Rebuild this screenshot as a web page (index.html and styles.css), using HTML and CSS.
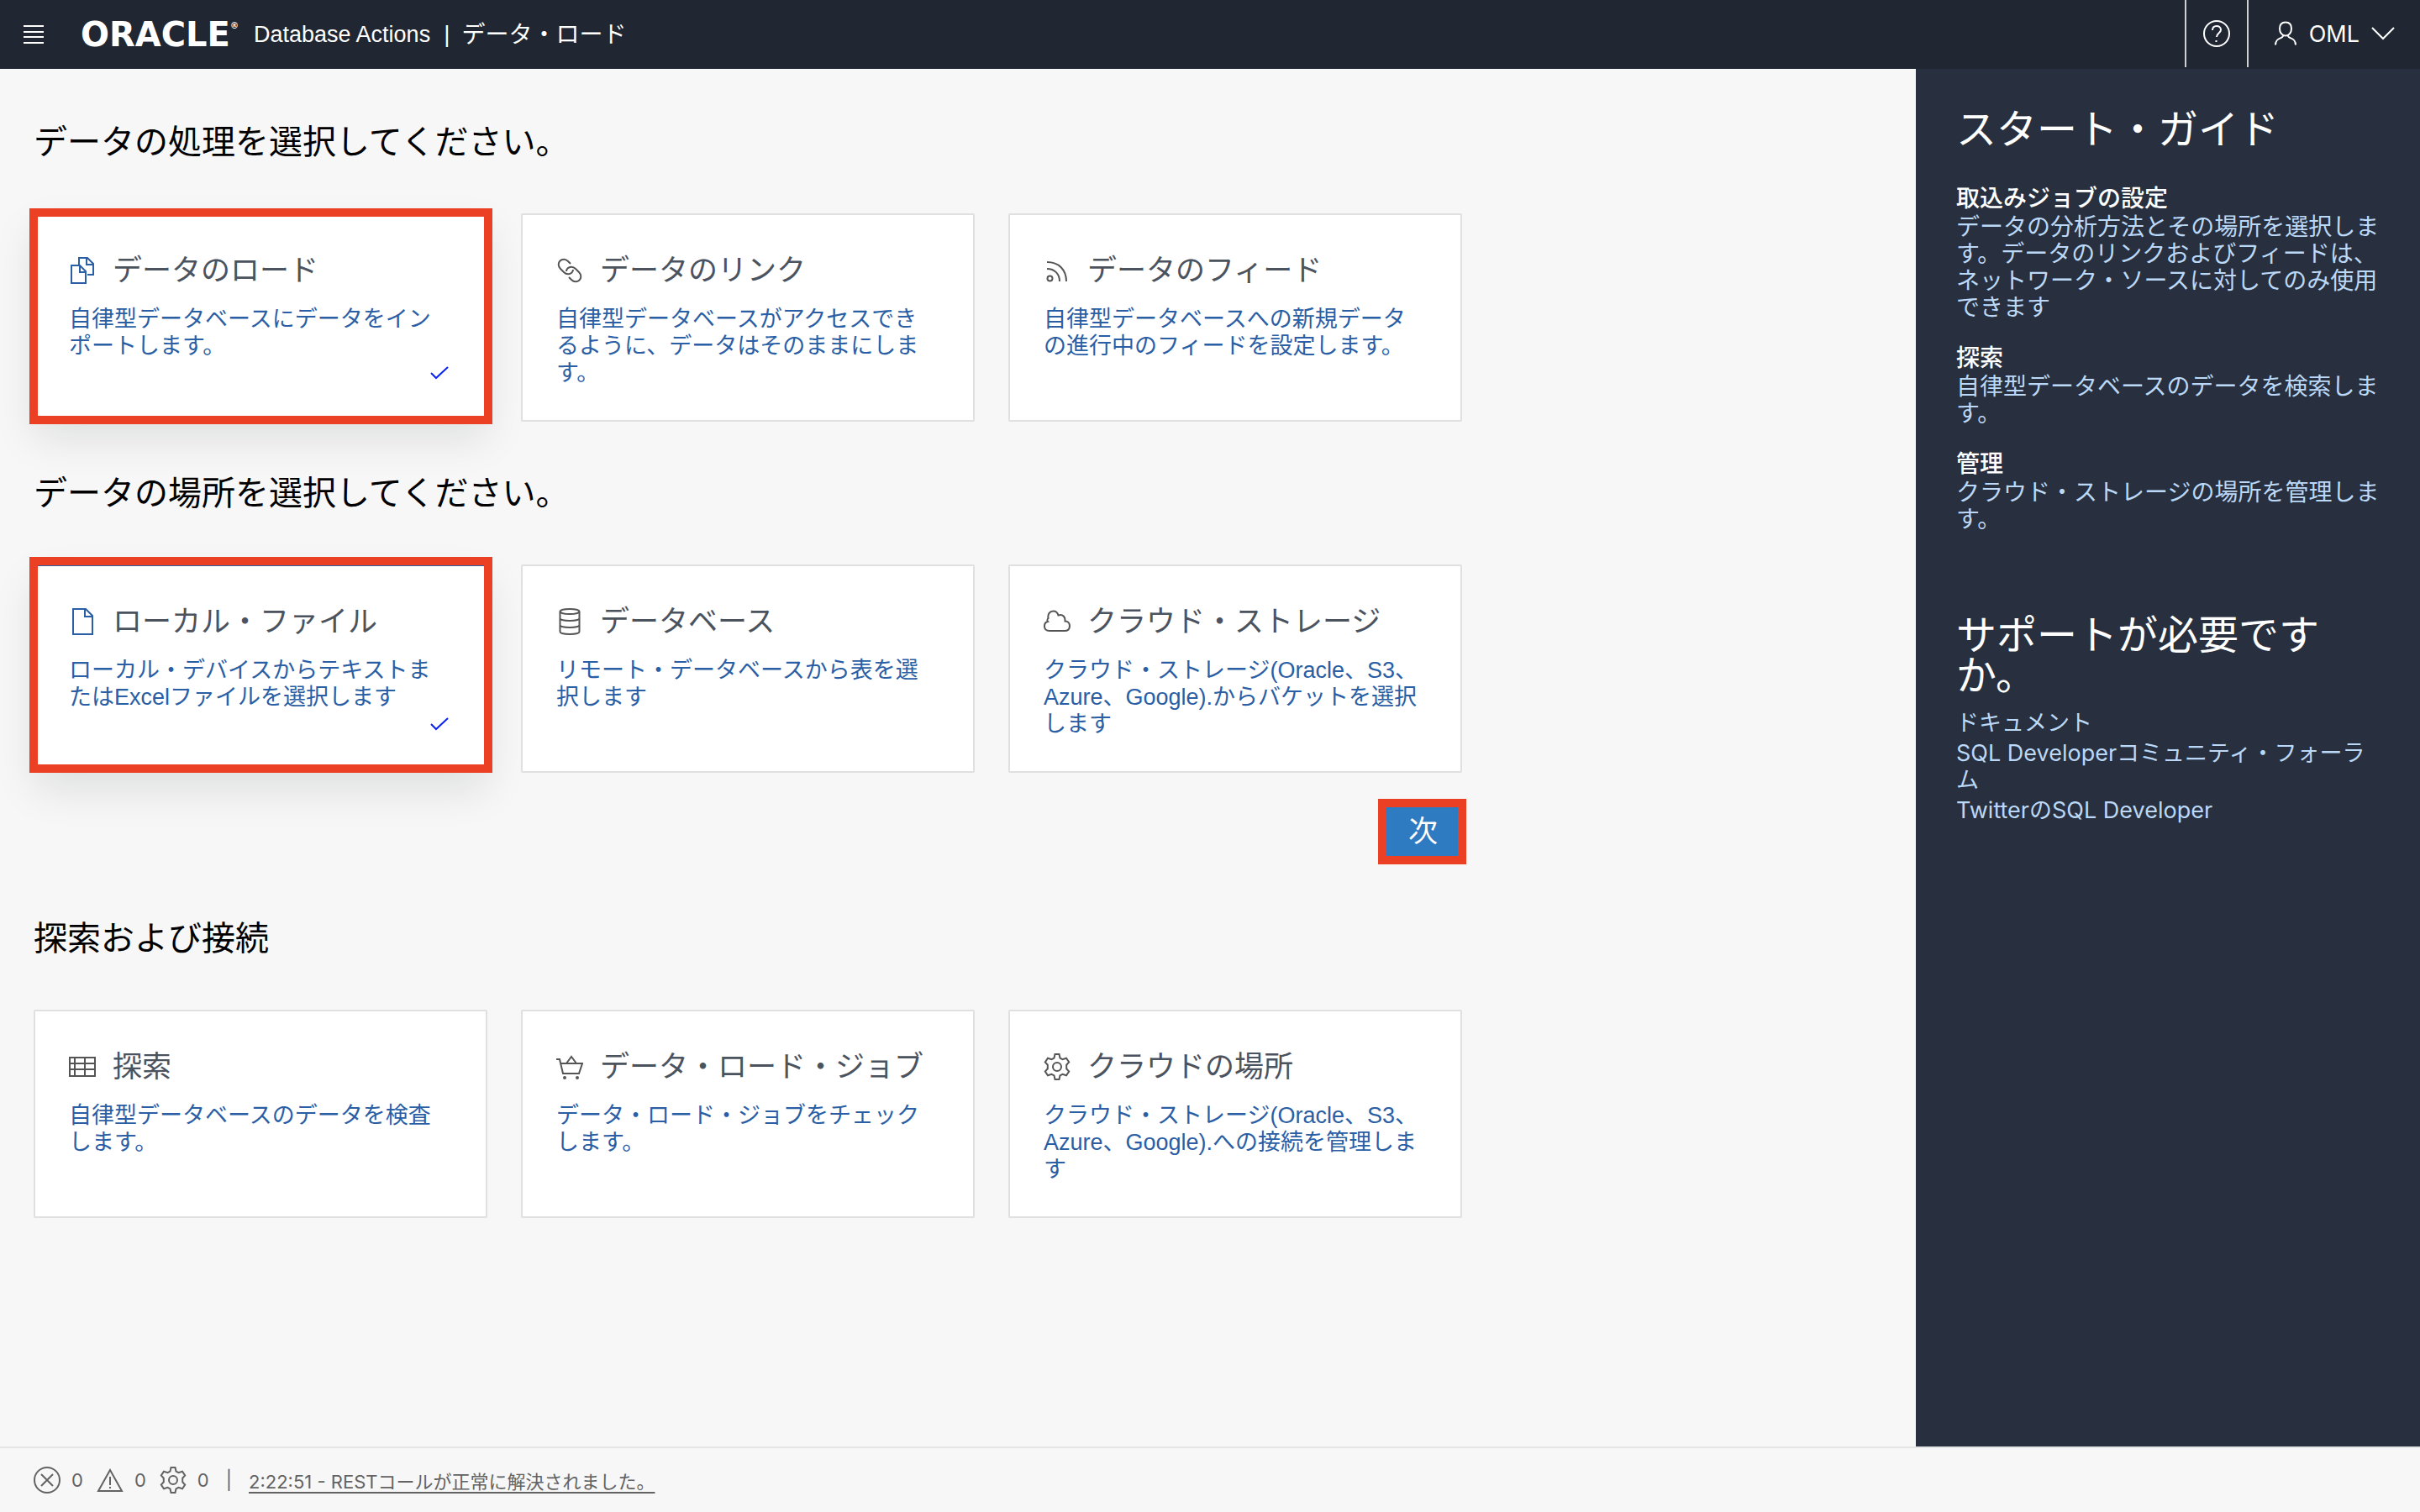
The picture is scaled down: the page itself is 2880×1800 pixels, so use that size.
FILE: index.html
```html
<!DOCTYPE html>
<html lang="ja">
<head>
<meta charset="utf-8">
<title>Database Actions | データ・ロード</title>
<link rel="stylesheet" href="styles.css">
</head>
<body>
<header class="topbar">
  <button class="icon-button menu-button" type="button" aria-label="メニュー">
    <svg class="menu-icon" viewBox="0 0 24 22"><path d="M0 1h24M0 8h24M0 14h24M0 21h24"/></svg>
  </button>
  <div class="brand">
    <span class="logo">ORACLE<sup class="logo-mark">®</sup></span>
    <span class="product">Database Actions</span>
    <span class="divider">|</span>
    <h1 class="page-name">データ・ロード</h1>
  </div>
  <div class="account">
    <button class="icon-button help-button" type="button" aria-label="ヘルプ">
      <svg class="icon" viewBox="0 0 32 32"><circle cx="16" cy="16" r="15"/><path d="M11 12c0-3.500 2.200-5 5-5s5 1.800 5 4.500c0 3.500-5 4-5 8.500M15.500 24v2"/></svg>
    </button>
    <button class="icon-button user-button" type="button">
      <svg class="icon" viewBox="0 0 32 32"><path d="M16 2.500c-4.500 0-7 3-7 7.500s2.500 8.500 7 8.500 7-4 7-8.500-2.500-7.500-7-7.500zM13 18.500c0 4-9 1.500-9 11M19 18.500c0 4 9 1.500 9 11"/></svg>
      <span>OML</span>
      <svg class="chevron" viewBox="0 0 28 16"><path d="M1 1l13 13L27 1"/></svg>
    </button>
  </div>
</header>

<div class="body">
  <main class="content">
    <section class="group">
      <h2 class="group-title">データの処理を選択してください。</h2>
      <div class="cards">
        <button class="card selected mark" type="button">
          <span class="card-head">
            <svg class="icon card-icon" viewBox="0 0 32 32"><path d="M3 10h10l7 7v14H3zM13 10v8h7M12 10V1h10l7 7v13h-7M21 1v8h8"/></svg>
            <span class="card-title">データのロード</span>
          </span>
          <span class="card-text">自律型データベースにデータをインポートします。</span>
          <svg class="check" viewBox="0 0 22 16"><path d="M1 8l6 6L21 1"/></svg>
        </button>
        <button class="card" type="button">
          <span class="card-head">
            <svg class="icon card-icon" viewBox="0 0 32 32"><path d="M17 8l-3-3C11 2 7 2 4.500 4.500S2 11 5 14l4 4c3 3 7 3 9.500 .5 1-1 1.500-2 1.500-3.500"/><path d="M15 24l3 3c3 3 7 3 9.500 .5s2.500-6.500-.5-9.500l-4-4c-3-3-7-3-9.500-.5-1 1-1.500 2-1.500 3.500"/></svg>
            <span class="card-title">データのリンク</span>
          </span>
          <span class="card-text">自律型データベースがアクセスできるように、データはそのままにします。</span>
        </button>
        <button class="card" type="button">
          <span class="card-head">
            <svg class="icon card-icon" viewBox="0 0 32 32"><circle cx="7.500" cy="25.500" r="3"/><path d="M4 14c9 0 15 6 15 15M4 6c14 0 23 9 23 23"/></svg>
            <span class="card-title">データのフィード</span>
          </span>
          <span class="card-text">自律型データベースへの新規データの進行中のフィードを設定します。</span>
        </button>
      </div>
    </section>

    <section class="group">
      <h2 class="group-title">データの場所を選択してください。</h2>
      <div class="cards">
        <button class="card selected mark mark-raised" type="button">
          <span class="card-head">
            <svg class="icon card-icon" viewBox="0 0 32 32"><path d="M5 1h15l8 8v22H5zM19 1v9h9"/></svg>
            <span class="card-title">ローカル・ファイル</span>
          </span>
          <span class="card-text">ローカル・デバイスからテキストまたはExcelファイルを選択します</span>
          <svg class="check" viewBox="0 0 22 16"><path d="M1 8l6 6L21 1"/></svg>
        </button>
        <button class="card" type="button">
          <span class="card-head">
            <svg class="icon card-icon" viewBox="0 0 32 32"><ellipse cx="16" cy="4" rx="11.500" ry="3"/><path d="M4.500 4v24c0 4 23 4 23 0V4M4.500 12c0 4 23 4 23 0M4.500 20c0 4 23 4 23 0"/></svg>
            <span class="card-title">データベース</span>
          </span>
          <span class="card-text">リモート・データベースから表を選択します</span>
        </button>
        <button class="card" type="button">
          <span class="card-head">
            <svg class="icon card-icon" viewBox="0 0 32 32"><path d="M7 27c-4 0-6-2.500-6-5.500s1.500-5 4-5.500c-1-1-.5-3 .5-4C4.500 7 7.500 3.500 11.500 3.500c3 0 5 1.500 6 5 5-1.500 8.500 1.500 8 7 4 0 5.500 3 5.500 5.500 0 3.500-2 6-6 6z"/></svg>
            <span class="card-title">クラウド・ストレージ</span>
          </span>
          <span class="card-text">クラウド・ストレージ(Oracle、S3、Azure、Google).からバケットを選択します</span>
        </button>
      </div>
      <div class="actions"><button class="next-button" type="button">次</button></div>
    </section>

    <section class="group">
      <h2 class="group-title">探索および接続</h2>
      <div class="cards">
        <button class="card" type="button">
          <span class="card-head">
            <svg class="icon card-icon" viewBox="0 0 32 32"><path d="M1 5h30v22H1zM1 12h30M1 19h30M7 5v22M19 5v22"/></svg>
            <span class="card-title">探索</span>
          </span>
          <span class="card-text">自律型データベースのデータを検査します。</span>
        </button>
        <button class="card" type="button">
          <span class="card-head">
            <svg class="icon card-icon" viewBox="0 0 32 32"><path d="M0 7h4l4 17h19l4-12H5M12 12l6-8 6 8"/><circle cx="10" cy="29" r="1"/><circle cx="25" cy="29" r="1"/></svg>
            <span class="card-title">データ・ロード・ジョブ</span>
          </span>
          <span class="card-text">データ・ロード・ジョブをチェックします。</span>
        </button>
        <button class="card" type="button">
          <span class="card-head">
            <svg class="icon card-icon" viewBox="0 0 32 32"><path d="M13.500 1h5l1 4.500 3 1.700 4.500-1.500 3.200 4.800-3 3.200v4.600l3 3.200-3.200 4.800-4.500-1.500-3 1.700-1 4.500h-5l-1-4.500-3-1.700L5 26.300l-3.200-4.800 3-3.200v-4.600l-3-3.200L5 5.700l4.500 1.500 3-1.700z"/><circle cx="16" cy="16" r="5"/></svg>
            <span class="card-title">クラウドの場所</span>
          </span>
          <span class="card-text">クラウド・ストレージ(Oracle、S3、Azure、Google).への接続を管理します</span>
        </button>
      </div>
    </section>
  </main>

  <aside class="guide">
    <h2 class="guide-title">スタート・ガイド</h2>
    <section class="topic">
      <h3>取込みジョブの設定</h3>
      <p>データの分析方法とその場所を選択します。データのリンクおよびフィードは、ネットワーク・ソースに対してのみ使用できます</p>
    </section>
    <section class="topic">
      <h3>探索</h3>
      <p>自律型データベースのデータを検索します。</p>
    </section>
    <section class="topic">
      <h3>管理</h3>
      <p>クラウド・ストレージの場所を管理します。</p>
    </section>
    <h2 class="guide-title support-title">サポートが必要ですか。</h2>
    <ul class="links">
      <li><a href="#docs">ドキュメント</a></li>
      <li><a href="#forum">SQL Developerコミュニティ・フォーラム</a></li>
      <li><a href="#twitter">TwitterのSQL Developer</a></li>
    </ul>
  </aside>
</div>

<footer class="statusbar">
  <span class="count"><svg class="icon" viewBox="0 0 32 32"><circle cx="16" cy="16" r="15"/><path d="M9 9l14 14M23 9L9 23"/></svg>0</span>
  <span class="count"><svg class="icon" viewBox="0 0 32 32"><path d="M16 4L2 29h28zM16 12v10M16 24v2"/></svg>0</span>
  <span class="count"><svg class="icon" viewBox="0 0 32 32"><path d="M13.500 1h5l1 4.500 3 1.700 4.500-1.500 3.200 4.800-3 3.200v4.600l3 3.200-3.200 4.800-4.500-1.500-3 1.700-1 4.500h-5l-1-4.500-3-1.700L5 26.300l-3.200-4.800 3-3.200v-4.600l-3-3.200L5 5.700l4.500 1.500 3-1.700z"/><circle cx="16" cy="16" r="5"/></svg>0</span>
  <span class="bar">|</span>
  <a class="message" href="#log">2:22:51 - RESTコールが正常に解決されました。</a>
</footer>
</body>
</html>
```

FILE: styles.css
```css
* {
  box-sizing: border-box;
}

body {
  margin: 0;
  min-height: 100vh;
  display: flex;
  flex-direction: column;
  background: #f7f7f7;
  color: #000;
  font-family: "Liberation Sans", "Noto Sans CJK JP", sans-serif;
  font-size: 28px;
}

h1,
h2,
h3,
p,
ul {
  margin: 0;
  padding: 0;
  font-weight: 400;
}

button {
  margin: 0;
  padding: 0;
  border: 0;
  background: none;
  color: inherit;
  font: inherit;
  text-align: left;
  cursor: pointer;
}

svg {
  flex: none;
  fill: none;
  stroke: currentColor;
  stroke-width: 2;
}

.icon {
  width: 32px;
  height: 32px;
}

/* Top bar */
.topbar {
  display: flex;
  align-items: center;
  height: 82px;
  padding-left: 28px;
  background: #202732;
  color: #fff;
}

.icon-button {
  display: flex;
  align-items: center;
}

.menu-icon {
  width: 24px;
  height: 22px;
}

.brand {
  display: flex;
  align-items: center;
  margin-left: 44px;
}

.logo {
  display: flex;
  width: 206px;
  font: 700 40px/44px "DejaVu Sans", sans-serif;
}

.logo-mark {
  font-size: 10px;
  line-height: 24px;
}

.product {
  font-size: 27px;
}

.divider {
  margin: 0 14px 0 16px;
}

.page-name {
  padding-top: 2px;
  font-size: 28px;
  line-height: 40px;
}

.account {
  display: flex;
  align-items: flex-start;
  height: 100%;
  margin-left: auto;
}

.help-button,
.user-button {
  height: 80px;
  border-left: 2px solid #d0d0d0;
}

.help-button {
  padding: 0 20px;
}

.user-button {
  gap: 12px;
  padding: 0 30px 0 28px;
  font-family: Inter, sans-serif;
  font-size: 27px;
}

.chevron {
  width: 28px;
  height: 16px;
  margin-left: 2px;
}

/* Page body */
.body {
  display: flex;
  flex: 1;
}

.content {
  flex: 1;
  padding: 57px 40px 40px;
}

.group + .group {
  margin-top: 55px;
}

.group + .group:last-child {
  margin-top: 58px;
}

.group-title {
  margin-bottom: 55px;
  font-size: 40px;
  line-height: 60px;
}

.cards {
  display: grid;
  grid-template-columns: repeat(3, minmax(0, 540px));
  gap: 40px;
}

.card {
  position: relative;
  display: flex;
  flex-direction: column;
  justify-content: flex-start;
  gap: 20px;
  min-height: 248px;
  padding: 44px 48px 36px 40px;
  border: 2px solid #e0e0e0;
  border-radius: 2px;
  background: #fff;
}

.card-head {
  display: flex;
  align-items: center;
  gap: 20px;
  color: #4b535f;
}

.card-icon {
  color: #555;
}

.card-title {
  font-size: 35px;
  line-height: 44px;
}

.card-text {
  color: #2a5ea5;
  font-size: 27px;
  line-height: 32px;
}

.card.selected {
  border-color: #2a5ea5;
  box-shadow: 0 20px 50px rgba(0, 20, 20, 0.1);
}

.selected .card-icon {
  color: #2a5ea5;
}

.check {
  position: absolute;
  right: 44px;
  bottom: 48px;
  width: 22px;
  height: 16px;
  color: #0a22f0;
}

/* Red frame that calls out the chosen card */
.mark::after {
  content: "";
  position: absolute;
  inset: -8px -8px -5px -7px;
  border: 10px solid #ec4024;
}

.mark-raised::after {
  inset: -11px -8px -2px -7px;
}

.actions {
  display: flex;
  justify-content: flex-end;
  max-width: 1705px;
  margin-top: 31px;
}

.next-button {
  padding: 0 24px 0 26px;
  border: 10px solid #ec4024;
  background: #2f7bc1;
  color: #fff;
  font-size: 35px;
  line-height: 58px;
}

/* Guide */
.guide {
  width: 600px;
  padding: 49px 48px;
  background: #28303f;
  color: #fff;
}

.guide-title {
  margin-bottom: 40px;
  font-size: 48px;
  line-height: 48px;
}

.topic {
  margin-bottom: 26px;
}

.topic h3 {
  font-size: 28px;
  font-weight: 500;
  line-height: 36px;
}

.topic p {
  color: #bcd8f7;
  line-height: 32px;
}

.support-title {
  margin: 98px 0 16px;
}

.links {
  list-style: none;
  font-family: Inter, "Noto Sans CJK JP", sans-serif;
  font-size: 27px;
  line-height: 32px;
}

.links li {
  margin-bottom: 4px;
}

.links a {
  color: #bcd8f7;
  text-decoration: none;
}

/* Status bar */
.statusbar {
  display: flex;
  align-items: center;
  height: 78px;
  padding: 0 40px;
  border-top: 2px solid #e4e4e4;
  color: #636363;
  font-family: Inter, "Noto Sans CJK JP", sans-serif;
  font-size: 22px;
}

.count {
  display: flex;
  align-items: center;
  gap: 13px;
  margin-right: 16px;
}

.bar {
  margin: 0 20px 0 4px;
}

.message {
  color: inherit;
  text-decoration-thickness: 2px;
  text-underline-offset: 4px;
}
```
